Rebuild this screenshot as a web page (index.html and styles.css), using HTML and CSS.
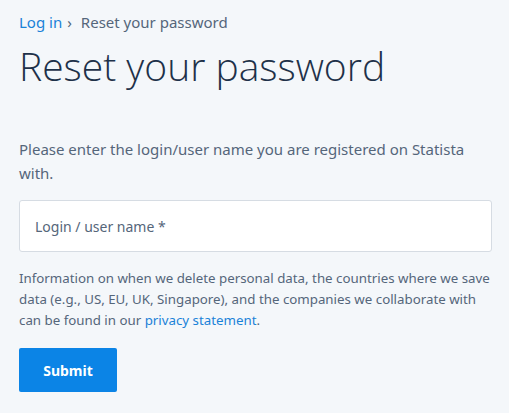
FILE: index.html
```html
<!DOCTYPE html>
<html lang="en">
<head>
<meta charset="utf-8">
<title>Reset your password</title>
<link rel="stylesheet" href="styles.css">
</head>
<body>
<main class="page">
  <nav class="crumbs">
    <a class="crumb-link" href="#">Log in</a>
    <span class="crumb-sep">›</span>
    <span class="crumb-current">Reset your password</span>
  </nav>
  <h1 class="title">Reset your password</h1>
  <p class="intro">Please enter the login/user name you are registered on Statista with.</p>
  <form class="form">
    <input class="field" type="text" placeholder="Login / user name *">
    <p class="info">Information on when we delete personal data, the countries where we save data (e.g., US, EU, UK, Singapore), and the companies we collaborate with can be found in our <a class="link" href="#">privacy statement</a>.</p>
    <button class="submit" type="button">Submit</button>
  </form>
</main>
</body>
</html>
```
FILE: styles.css
```css
html, body {
  margin: 0;
  padding: 0;
  background: #f4f7fa;
}
body {
  font-family: "Noto Sans", "Open Sans", sans-serif;
  color: #55667a;
}
.page {
  padding: 12px 16px 0 19px;
}
.crumbs {
  display: flex;
  align-items: baseline;
  font-size: 15px;
  line-height: 20px;
}
.crumb-link {
  color: #1a82d8;
  text-decoration: none;
}
.crumb-sep {
  margin: 0 9px 0 5px;
  color: #55667a;
}
.crumb-current {
  color: #55667a;
}
.title {
  margin: 10px 0 0;
  font-family: "Open Sans", "Noto Sans", sans-serif;
  font-size: 39px;
  font-weight: 300;
  line-height: 48px;
  color: #1e3149;
}
.intro {
  margin: 47px 0 0;
  font-size: 15px;
  line-height: 24px;
}
.form {
  margin-top: 15px;
  margin-right: 1px;
}
.field {
  display: block;
  box-sizing: border-box;
  width: 100%;
  height: 52px;
  padding: 0 15px;
  border: 1px solid #d6dce3;
  border-radius: 3px;
  background: #fff;
  font-family: inherit;
  font-size: 14px;
  color: #55667a;
  outline: none;
}
.field::placeholder {
  color: #55667a;
}
.info {
  margin: 16px -1px 0 0;
  font-size: 13.3px;
  line-height: 21px;
}
.link {
  color: #1a82d8;
  text-decoration: none;
}
.submit {
  margin-top: 17px;
  width: 98px;
  height: 44px;
  border: 0;
  border-radius: 2px;
  background: #0b84e6;
  color: #fff;
  font-family: inherit;
  font-size: 14px;
  font-weight: 700;
}
```
